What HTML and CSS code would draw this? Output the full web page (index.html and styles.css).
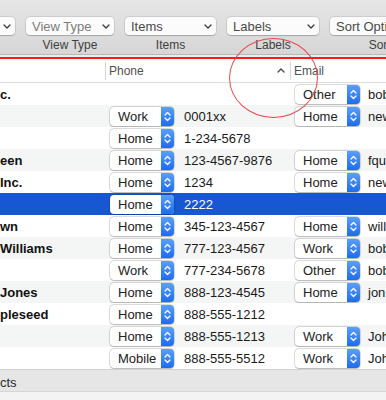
FILE: index.html
```html
<!DOCTYPE html>
<html>
<head>
<meta charset="utf-8">
<link rel="stylesheet" href="styles.css">
</head>
<body>
<div class="window">
  <header class="toolbar">
    <div class="tool w91"><div class="popbtn"><span class="btn-text">Group</span><svg class="chev" width="8" height="5" viewBox="0 0 8 5"><path d="M1 1 L4 4 L7 1"/></svg></div><div class="tool-label">Group</div></div>
    <div class="tool w88"><div class="popbtn"><span class="btn-text dim">View Type</span><svg class="chev" width="8" height="5" viewBox="0 0 8 5"><path d="M1 1 L4 4 L7 1"/></svg></div><div class="tool-label">View Type</div></div>
    <div class="tool w91"><div class="popbtn"><span class="btn-text">Items</span><svg class="chev" width="8" height="5" viewBox="0 0 8 5"><path d="M1 1 L4 4 L7 1"/></svg></div><div class="tool-label">Items</div></div>
    <div class="tool w92"><div class="popbtn"><span class="btn-text">Labels</span><svg class="chev" width="8" height="5" viewBox="0 0 8 5"><path d="M1 1 L4 4 L7 1"/></svg></div><div class="tool-label">Labels</div></div>
    <div class="tool w144"><div class="popbtn"><span class="btn-text">Sort Options</span><svg class="chev" width="8" height="5" viewBox="0 0 8 5"><path d="M1 1 L4 4 L7 1"/></svg></div><div class="tool-label">Sort Options</div></div>
  </header>
  <div class="sep-line"></div>
  <div class="red-line"></div>

  <div class="table">
    <div class="thead">
      <div class="th th-name"></div>
      <div class="th th-phone"><span>Phone</span><svg class="sort" width="8" height="5" viewBox="0 0 8 5"><path d="M1 4 L4 1 L7 4"/></svg></div>
      <div class="th th-email">Email</div>
    </div>

    <div class="row">
      <div class="c-name">c.</div>
      <div class="c-phone"></div>
      <div class="c-email"><div class="pop"><span class="pop-text">Other</span><span class="stepper"><svg width="13" height="19" viewBox="0 0 13 19"><path d="M4 8 L6.5 5.5 L9 8 M4 11 L6.5 13.5 L9 11"/></svg></span></div><span class="val">bob@example.com</span></div>
    </div>
    <div class="row alt">
      <div class="c-name"></div>
      <div class="c-phone"><div class="pop"><span class="pop-text">Work</span><span class="stepper"><svg width="13" height="19" viewBox="0 0 13 19"><path d="M4 8 L6.5 5.5 L9 8 M4 11 L6.5 13.5 L9 11"/></svg></span></div><span class="val">0001xx</span></div>
      <div class="c-email"><div class="pop"><span class="pop-text">Home</span><span class="stepper"><svg width="13" height="19" viewBox="0 0 13 19"><path d="M4 8 L6.5 5.5 L9 8 M4 11 L6.5 13.5 L9 11"/></svg></span></div><span class="val">new@example.com</span></div>
    </div>
    <div class="row">
      <div class="c-name"></div>
      <div class="c-phone"><div class="pop"><span class="pop-text">Home</span><span class="stepper"><svg width="13" height="19" viewBox="0 0 13 19"><path d="M4 8 L6.5 5.5 L9 8 M4 11 L6.5 13.5 L9 11"/></svg></span></div><span class="val">1-234-5678</span></div>
      <div class="c-email"></div>
    </div>
    <div class="row alt">
      <div class="c-name">een</div>
      <div class="c-phone"><div class="pop"><span class="pop-text">Home</span><span class="stepper"><svg width="13" height="19" viewBox="0 0 13 19"><path d="M4 8 L6.5 5.5 L9 8 M4 11 L6.5 13.5 L9 11"/></svg></span></div><span class="val">123-4567-9876</span></div>
      <div class="c-email"><div class="pop"><span class="pop-text">Home</span><span class="stepper"><svg width="13" height="19" viewBox="0 0 13 19"><path d="M4 8 L6.5 5.5 L9 8 M4 11 L6.5 13.5 L9 11"/></svg></span></div><span class="val">fqueen@example.com</span></div>
    </div>
    <div class="row">
      <div class="c-name">Inc.</div>
      <div class="c-phone"><div class="pop"><span class="pop-text">Home</span><span class="stepper"><svg width="13" height="19" viewBox="0 0 13 19"><path d="M4 8 L6.5 5.5 L9 8 M4 11 L6.5 13.5 L9 11"/></svg></span></div><span class="val">1234</span></div>
      <div class="c-email"><div class="pop"><span class="pop-text">Home</span><span class="stepper"><svg width="13" height="19" viewBox="0 0 13 19"><path d="M4 8 L6.5 5.5 L9 8 M4 11 L6.5 13.5 L9 11"/></svg></span></div><span class="val">new@example.com</span></div>
    </div>
    <div class="row selected">
      <div class="c-name"></div>
      <div class="c-phone"><div class="pop"><span class="pop-text">Home</span><span class="stepper"><svg width="13" height="19" viewBox="0 0 13 19"><path d="M4 8 L6.5 5.5 L9 8 M4 11 L6.5 13.5 L9 11"/></svg></span></div><span class="val">2222</span></div>
      <div class="c-email"></div>
    </div>
    <div class="row">
      <div class="c-name">wn</div>
      <div class="c-phone"><div class="pop"><span class="pop-text">Home</span><span class="stepper"><svg width="13" height="19" viewBox="0 0 13 19"><path d="M4 8 L6.5 5.5 L9 8 M4 11 L6.5 13.5 L9 11"/></svg></span></div><span class="val">345-123-4567</span></div>
      <div class="c-email"><div class="pop"><span class="pop-text">Home</span><span class="stepper"><svg width="13" height="19" viewBox="0 0 13 19"><path d="M4 8 L6.5 5.5 L9 8 M4 11 L6.5 13.5 L9 11"/></svg></span></div><span class="val">will@example.com</span></div>
    </div>
    <div class="row alt">
      <div class="c-name">Williams</div>
      <div class="c-phone"><div class="pop"><span class="pop-text">Home</span><span class="stepper"><svg width="13" height="19" viewBox="0 0 13 19"><path d="M4 8 L6.5 5.5 L9 8 M4 11 L6.5 13.5 L9 11"/></svg></span></div><span class="val">777-123-4567</span></div>
      <div class="c-email"><div class="pop"><span class="pop-text">Work</span><span class="stepper"><svg width="13" height="19" viewBox="0 0 13 19"><path d="M4 8 L6.5 5.5 L9 8 M4 11 L6.5 13.5 L9 11"/></svg></span></div><span class="val">bob@example.com</span></div>
    </div>
    <div class="row">
      <div class="c-name"></div>
      <div class="c-phone"><div class="pop"><span class="pop-text">Work</span><span class="stepper"><svg width="13" height="19" viewBox="0 0 13 19"><path d="M4 8 L6.5 5.5 L9 8 M4 11 L6.5 13.5 L9 11"/></svg></span></div><span class="val">777-234-5678</span></div>
      <div class="c-email"><div class="pop"><span class="pop-text">Other</span><span class="stepper"><svg width="13" height="19" viewBox="0 0 13 19"><path d="M4 8 L6.5 5.5 L9 8 M4 11 L6.5 13.5 L9 11"/></svg></span></div><span class="val">bob@example.com</span></div>
    </div>
    <div class="row alt">
      <div class="c-name">Jones</div>
      <div class="c-phone"><div class="pop"><span class="pop-text">Home</span><span class="stepper"><svg width="13" height="19" viewBox="0 0 13 19"><path d="M4 8 L6.5 5.5 L9 8 M4 11 L6.5 13.5 L9 11"/></svg></span></div><span class="val">888-123-4545</span></div>
      <div class="c-email"><div class="pop"><span class="pop-text">Home</span><span class="stepper"><svg width="13" height="19" viewBox="0 0 13 19"><path d="M4 8 L6.5 5.5 L9 8 M4 11 L6.5 13.5 L9 11"/></svg></span></div><span class="val">jon@example.com</span></div>
    </div>
    <div class="row">
      <div class="c-name">pleseed</div>
      <div class="c-phone"><div class="pop"><span class="pop-text">Home</span><span class="stepper"><svg width="13" height="19" viewBox="0 0 13 19"><path d="M4 8 L6.5 5.5 L9 8 M4 11 L6.5 13.5 L9 11"/></svg></span></div><span class="val">888-555-1212</span></div>
      <div class="c-email"></div>
    </div>
    <div class="row alt">
      <div class="c-name"></div>
      <div class="c-phone"><div class="pop"><span class="pop-text">Home</span><span class="stepper"><svg width="13" height="19" viewBox="0 0 13 19"><path d="M4 8 L6.5 5.5 L9 8 M4 11 L6.5 13.5 L9 11"/></svg></span></div><span class="val">888-555-1213</span></div>
      <div class="c-email"><div class="pop"><span class="pop-text">Work</span><span class="stepper"><svg width="13" height="19" viewBox="0 0 13 19"><path d="M4 8 L6.5 5.5 L9 8 M4 11 L6.5 13.5 L9 11"/></svg></span></div><span class="val">John@example.com</span></div>
    </div>
    <div class="row">
      <div class="c-name"></div>
      <div class="c-phone"><div class="pop"><span class="pop-text">Mobile</span><span class="stepper"><svg width="13" height="19" viewBox="0 0 13 19"><path d="M4 8 L6.5 5.5 L9 8 M4 11 L6.5 13.5 L9 11"/></svg></span></div><span class="val">888-555-5512</span></div>
      <div class="c-email"><div class="pop"><span class="pop-text">Work</span><span class="stepper"><svg width="13" height="19" viewBox="0 0 13 19"><path d="M4 8 L6.5 5.5 L9 8 M4 11 L6.5 13.5 L9 11"/></svg></span></div><span class="val">John@example.com</span></div>
    </div>
  </div>

  <footer class="footer">
    <div class="group-row">cts</div>
    <div class="footer-rest"></div>
  </footer>

  <div class="annotation"></div>
</div>
</body>
</html>
```

FILE: styles.css
```css
* { box-sizing: border-box; }

html, body {
  margin: 0;
  padding: 0;
  background: #ffffff;
}

body {
  width: 386px;
  height: 400px;
  overflow: hidden;
  font-family: "Liberation Sans", Arial, sans-serif;
  font-size: 13px;
  color: #1a1a1a;
}

.window {
  position: relative;
  width: 386px;
  height: 400px;
  overflow: hidden;
  display: flex;
  flex-direction: column;
}

/* Toolbar */
.toolbar {
  height: 55px;
  flex: none;
  display: flex;
  gap: 11px;
  margin-left: -76px;
  padding-top: 17px;
  background: linear-gradient(#e6e6e6, #d6d6d6);
  border-bottom: 1px solid #b9b9b9;
  width: 600px;
}

.tool {
  flex: none;
  display: flex;
  flex-direction: column;
  align-items: center;
}

.w88 { width: 88px; }
.w91 { width: 91px; }
.w92 { width: 92px; }
.w144 { width: 144px; }

.popbtn {
  width: 100%;
  height: 18px;
  display: flex;
  align-items: center;
  justify-content: space-between;
  padding: 0 4px 0 6px;
  background: #fbfbfb;
  border-radius: 4px;
  box-shadow: 0 0 0 0.5px rgba(0,0,0,0.14), 0 0.5px 1px rgba(0,0,0,0.18);
}

.btn-text {
  font-size: 13px;
  color: #4a4a4a;
  white-space: nowrap;
}

.btn-text.dim { color: #7c7c7c; }

.chev path {
  fill: none;
  stroke: #3a3a3a;
  stroke-width: 1.3;
  stroke-linecap: round;
  stroke-linejoin: round;
}

.tool-label {
  margin-top: 3px;
  font-size: 12px;
  line-height: 15px;
  color: #3e3e3e;
  white-space: nowrap;
}

.sep-line {
  height: 2px;
  flex: none;
  background: #ececec;
}

.red-line {
  height: 2px;
  flex: none;
  background: #ff1a1a;
}

/* Table */
.table {
  flex: none;
  display: flex;
  flex-direction: column;
}

.thead {
  height: 24px;
  display: grid;
  grid-template-columns: 105px 185px 1fr;
  align-items: center;
  background: #ffffff;
  border-bottom: 1px solid #dcdcdc;
}

.th {
  height: 18px;
  display: flex;
  align-items: center;
  font-size: 12px;
  color: #505050;
  white-space: nowrap;
}

.th-phone, .th-email {
  border-left: 1px solid #d6d6d6;
  padding-left: 3px;
}

.th-phone {
  justify-content: space-between;
  padding-right: 5px;
}

.sort path {
  fill: none;
  stroke: #4a4a4a;
  stroke-width: 1.4;
  stroke-linecap: round;
  stroke-linejoin: round;
}

.row {
  height: 22px;
  display: grid;
  grid-template-columns: 105px 185px 1fr;
  align-items: center;
  background: #ffffff;
}

.row.alt { background: #f4f5f5; }

.row.selected {
  background: #1857d2;
  color: #ffffff;
}

.c-name {
  font-weight: bold;
  font-size: 13px;
  color: #111111;
  white-space: nowrap;
  overflow: hidden;
}

.c-phone, .c-email {
  display: flex;
  align-items: center;
  white-space: nowrap;
  overflow: hidden;
  height: 22px;
}

.c-phone {
  padding-left: 5px;
  gap: 10px;
}

.c-email {
  padding-left: 5px;
  gap: 8px;
}

.val {
  font-size: 13px;
  color: #1a1a1a;
}

.selected .val { color: #ffffff; }

.pop {
  flex: none;
  width: 64px;
  height: 19px;
  display: flex;
  align-items: stretch;
  background: #ffffff;
  border-radius: 4px;
  box-shadow: 0 0 0 0.5px rgba(0,0,0,0.22), 0 0.5px 1.5px rgba(0,0,0,0.2);
  overflow: hidden;
}

.c-email .pop { width: 65px; }

.pop-text {
  flex: 1;
  padding-left: 8px;
  font-size: 13px;
  line-height: 19px;
  color: #222222;
}

.stepper {
  flex: none;
  width: 13px;
  background: linear-gradient(#5a9ff9, #1c6cf0);
  display: flex;
}

.stepper path {
  fill: none;
  stroke: #ffffff;
  stroke-width: 1.3;
  stroke-linecap: round;
  stroke-linejoin: round;
}

/* Footer */
.footer {
  flex: 1;
  display: flex;
  flex-direction: column;
  border-top: 1px solid #d2d2d2;
}

.group-row {
  height: 22px;
  flex: none;
  display: flex;
  align-items: center;
  padding-top: 3px;
  background: #e6e6e6;
  font-size: 13px;
  color: #2a2a2a;
  border-bottom: 1px solid #d6d6d6;
}

.footer-rest {
  flex: 1;
  background: #f3f3f3;
}

/* Annotation overlay */
.annotation {
  position: absolute;
  left: 229px;
  top: 38px;
  width: 89px;
  height: 80px;
  border: 1px solid #e8484a;
  border-radius: 50%;
  pointer-events: none;
}
```
